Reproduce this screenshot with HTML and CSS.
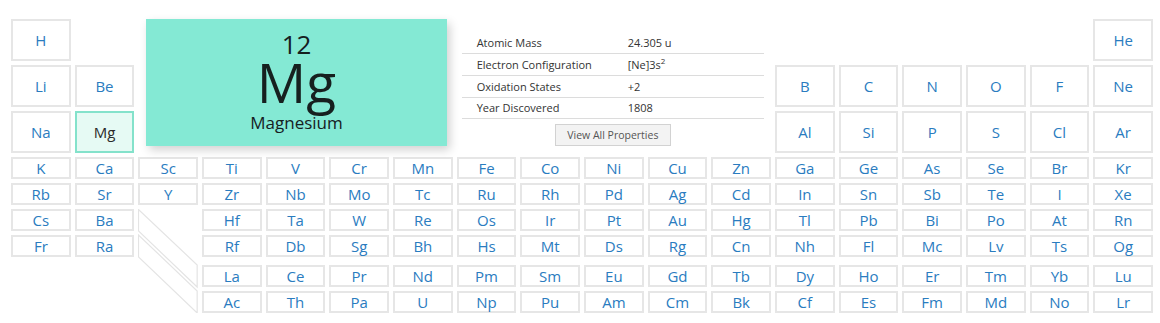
FILE: index.html
```html
<!DOCTYPE html>
<html lang="en">
<head>
    <meta charset="UTF-8">
    <meta name="viewport" content="width=device-width, initial-scale=1.0">
    <title>Periodic Table</title>
    <link rel="stylesheet" href="styles.css">
</head>
<body>
    <div class="ptable" id="ptable">
        <div class="detail-card">
            <div class="detail-number">12</div>
            <div class="detail-symbol">Mg</div>
            <div class="detail-name">Magnesium</div>
        </div>

        <div class="detail-props">
            <table class="props-table">
                <tr><td>Atomic Mass</td><td>24.305 u</td></tr>
                <tr><td>Electron Configuration</td><td>[Ne]3s<sup>2</sup></td></tr>
                <tr><td>Oxidation States</td><td>+2</td></tr>
                <tr><td>Year Discovered</td><td>1808</td></tr>
            </table>
            <button class="props-btn">View All Properties</button>
        </div>

        <svg class="series-lines" viewBox="0 0 60 104" preserveAspectRatio="none">
            <polygon points="0.5,0.5 0.5,22 59.5,78 59.5,56" />
            <polygon points="0.5,26 0.5,48 59.5,104 59.5,82" />
        </svg>
    </div>

    <script>
document.addEventListener('DOMContentLoaded', () => {
    // rows of the table, "." = empty slot
    const rows = [
        'H . . . . . . . . . . . . . . . . He',
        'Li Be . . . . . . . . . . B C N O F Ne',
        'Na Mg . . . . . . . . . . Al Si P S Cl Ar',
        'K Ca Sc Ti V Cr Mn Fe Co Ni Cu Zn Ga Ge As Se Br Kr',
        'Rb Sr Y Zr Nb Mo Tc Ru Rh Pd Ag Cd In Sn Sb Te I Xe',
        'Cs Ba . Hf Ta W Re Os Ir Pt Au Hg Tl Pb Bi Po At Rn',
        'Fr Ra . Rf Db Sg Bh Hs Mt Ds Rg Cn Nh Fl Mc Lv Ts Og',
        '',
        '. . . La Ce Pr Nd Pm Sm Eu Gd Tb Dy Ho Er Tm Yb Lu',
        '. . . Ac Th Pa U Np Pu Am Cm Bk Cf Es Fm Md No Lr'
    ];
    const table = document.querySelector('#ptable');

    rows.forEach((row, r) => {
        if (!row) return;
        row.split(' ').forEach((sym, c) => {
            if (sym === '.') return;
            const cell = document.createElement('div');
            cell.className = 'element' + (sym === 'Mg' ? ' selected' : '');
            cell.textContent = sym;
            cell.style.gridArea = `${r + 1} / ${c + 1}`;
            table.appendChild(cell);
        });
    });
});
    </script>
</body>
</html>
```

FILE: styles.css
```css
* {
    margin: 0;
    padding: 0;
    box-sizing: border-box;
}

body {
    background: #fff;
    font-family: 'Open Sans', 'Noto Sans', sans-serif;
    color: #333;
}

.ptable {
    width: 1142px;
    margin: 19px 0 0 11px;
    display: grid;
    grid-template-columns: repeat(18, 1fr);
    grid-template-rows: 42px 42px 42px 22px 22px 22px 22px 0 22px 22px;
    gap: 4px;
}

.element {
    display: flex;
    justify-content: center;
    align-items: center;
    border: 2px solid #e6e6e6;
    color: #2a7cbf;
    font-size: 15px;
    line-height: 1;
}

.element.selected {
    background: #e6faf4;
    border-color: #84e2cb;
    color: #2a2a2a;
}

/* big card for the selected element */
.detail-card {
    grid-column: 3 / 8;
    grid-row: 1 / 4;
    margin: 0 6px 7px 8px;
    padding-top: 10px;
    background: #84e9d4;
    box-shadow: 3px 4px 9px rgba(0, 0, 0, 0.18);
    display: flex;
    flex-direction: column;
    align-items: center;
    color: #16201f;
    z-index: 2;
}

.detail-number {
    font-size: 26px;
    line-height: 30px;
}

.detail-symbol {
    font-size: 55px;
    line-height: 46px;
}

.detail-name {
    font-size: 17px;
    line-height: 20px;
    margin-top: 8px;
}

.detail-props {
    grid-column: 8 / 13;
    grid-row: 1 / 4;
    padding: 13px 7px 0 5px;
    display: flex;
    flex-direction: column;
    align-items: center;
}

.props-table {
    width: 100%;
    border-collapse: collapse;
    font-size: 11px;
    color: #333;
}

.props-table td {
    height: 21.7px;
    border-bottom: 1px solid #dcdcdc;
    padding: 0;
    vertical-align: middle;
}

.props-table td:first-child {
    width: 166px;
    padding-left: 15px;
}

.props-table sup {
    font-size: 8px;
    line-height: 0;
}

.props-btn {
    margin-top: 5px;
    width: 116px;
    height: 22px;
    background: #f3f3f3;
    border: 1px solid #d2d2d2;
    color: #555;
    font-family: 'Open Sans', 'Noto Sans', sans-serif;
    font-size: 10.5px;
}

.series-lines {
    grid-column: 3;
    grid-row: 6 / 11;
    width: 100%;
    height: 100%;
}

.series-lines polygon {
    fill: none;
    stroke: #e4e4e4;
    stroke-width: 1.2;
    vector-effect: non-scaling-stroke;
}
```
